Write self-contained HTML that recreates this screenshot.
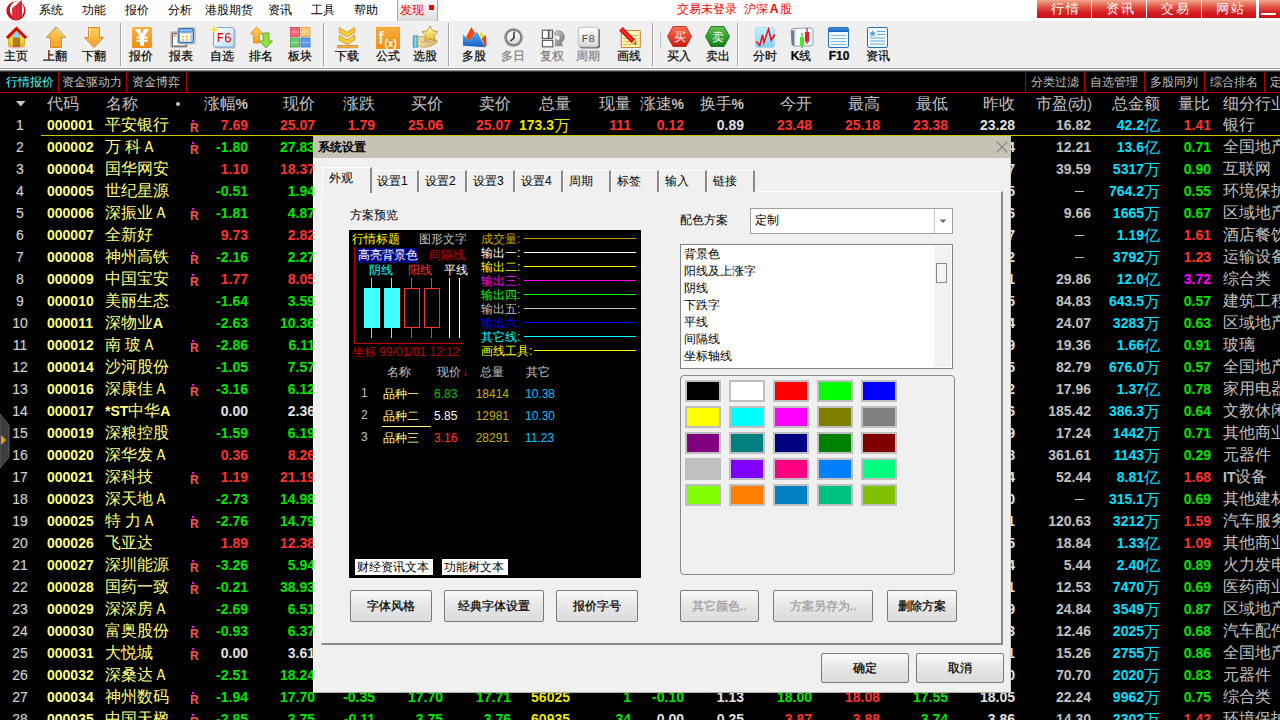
<!DOCTYPE html><html><head><meta charset="utf-8"><style>
html,body{margin:0;padding:0;width:1280px;height:720px;overflow:hidden;background:#000;}
body{position:relative;font-family:"Liberation Sans",sans-serif;}
.a{position:absolute;white-space:nowrap;line-height:1;}
.n{font-family:"Liberation Sans",sans-serif;font-weight:bold;font-size:14px;}
</style></head><body>
<div class="a" style="left:0px;top:0px;width:1280px;height:21px;background:#fff;"></div>
<svg class="a" style="left:0px;top:0px" width="36" height="22" viewBox="0 0 36 22">
<circle cx="16" cy="10.8" r="9.6" fill="#d40a14"/>
<ellipse cx="16.9" cy="9.8" rx="7.1" ry="8.3" fill="#fff"/>
<path d="M12.2 8.2 L21.8 0 L22 13.5 Q22 17 18 19.5 L12.2 19.5Z" fill="#d42030"/>
<path d="M15 6 V19.5 M18 3.5 V19" stroke="#e04050" stroke-width="1.2"/>

</svg>
<div class="a" style="left:39px;top:4px;font-size:12px;color:#000;">系统</div>
<div class="a" style="left:82px;top:4px;font-size:12px;color:#000;">功能</div>
<div class="a" style="left:125px;top:4px;font-size:12px;color:#000;">报价</div>
<div class="a" style="left:168px;top:4px;font-size:12px;color:#000;">分析</div>
<div class="a" style="left:205px;top:4px;font-size:12px;color:#000;">港股期货</div>
<div class="a" style="left:268px;top:4px;font-size:12px;color:#000;">资讯</div>
<div class="a" style="left:311px;top:4px;font-size:12px;color:#000;">工具</div>
<div class="a" style="left:354px;top:4px;font-size:12px;color:#000;">帮助</div>
<div class="a" style="left:397px;top:0px;width:41px;height:21px;background:linear-gradient(#fafafa,#dedede);border-left:1px solid #a8a8a8;border-right:1px solid #a8a8a8;box-sizing:border-box;"></div>
<div class="a" style="left:400px;top:4px;font-size:12px;color:#ff0000;">发现</div>
<div class="a" style="left:429px;top:5px;width:5px;height:5px;background:#ff0000;"></div>
<div class="a" style="left:677px;top:3px;font-size:12px;color:#ff0000;">交易未登录&nbsp;&nbsp;沪深<b style="font-size:12px;margin:0 2px">A</b>股</div>
<div class="a" style="left:1037px;top:0;width:54px;height:18px;background:linear-gradient(#f2a890 0%,#e45a48 35%,#d41c22 70%,#cc1018 100%);color:#fff;font-size:13px;text-align:center;line-height:17px;letter-spacing:2px;padding-left:3px;box-sizing:border-box">行情</div>
<div class="a" style="left:1092px;top:0;width:54px;height:18px;background:linear-gradient(#f2a890 0%,#e45a48 35%,#d41c22 70%,#cc1018 100%);color:#fff;font-size:13px;text-align:center;line-height:17px;letter-spacing:2px;padding-left:3px;box-sizing:border-box">资讯</div>
<div class="a" style="left:1147px;top:0;width:54px;height:18px;background:linear-gradient(#f2a890 0%,#e45a48 35%,#d41c22 70%,#cc1018 100%);color:#fff;font-size:13px;text-align:center;line-height:17px;letter-spacing:2px;padding-left:3px;box-sizing:border-box">交易</div>
<div class="a" style="left:1202px;top:0;width:54px;height:18px;background:linear-gradient(#f2a890 0%,#e45a48 35%,#d41c22 70%,#cc1018 100%);color:#fff;font-size:13px;text-align:center;line-height:17px;letter-spacing:2px;padding-left:3px;box-sizing:border-box">网站</div>
<div class="a" style="left:1259px;top:0;width:21px;height:18px;background:linear-gradient(#f2a890 0%,#e45a48 35%,#d41c22 70%,#cc1018 100%);"></div>
<div class="a" style="left:1261px;top:13px;width:15px;height:2px;background:#fff;"></div>
<div class="a" style="left:0px;top:21px;width:1280px;height:47px;background:#efefef;"></div>
<div class="a" style="left:0px;top:68px;width:1280px;height:1px;background:#a0a0a0;"></div>
<div class="a" style="left:0px;top:69px;width:1280px;height:1px;background:#ffffff;"></div>
<div class="a" style="left:0px;top:70px;width:1280px;height:1px;background:#909090;"></div>
<div class="a" style="left:0px;top:71px;width:1280px;height:1px;background:#383838;"></div>
<div class="a" style="left:-9.5px;top:50px;width:50px;text-align:center;font-size:12px;color:#000;-webkit-text-stroke:0.2px #000">主页</div>
<div class="a" style="left:30px;top:50px;width:50px;text-align:center;font-size:12px;color:#000;-webkit-text-stroke:0.2px #000">上翻</div>
<div class="a" style="left:69px;top:50px;width:50px;text-align:center;font-size:12px;color:#000;-webkit-text-stroke:0.2px #000">下翻</div>
<div class="a" style="left:116px;top:50px;width:50px;text-align:center;font-size:12px;color:#000;-webkit-text-stroke:0.2px #000">报价</div>
<div class="a" style="left:156px;top:50px;width:50px;text-align:center;font-size:12px;color:#000;-webkit-text-stroke:0.2px #000">报表</div>
<div class="a" style="left:197px;top:50px;width:50px;text-align:center;font-size:12px;color:#000;-webkit-text-stroke:0.2px #000">自选</div>
<div class="a" style="left:236px;top:50px;width:50px;text-align:center;font-size:12px;color:#000;-webkit-text-stroke:0.2px #000">排名</div>
<div class="a" style="left:275px;top:50px;width:50px;text-align:center;font-size:12px;color:#000;-webkit-text-stroke:0.2px #000">板块</div>
<div class="a" style="left:321.5px;top:50px;width:50px;text-align:center;font-size:12px;color:#000;-webkit-text-stroke:0.2px #000">下载</div>
<div class="a" style="left:362.5px;top:50px;width:50px;text-align:center;font-size:12px;color:#000;-webkit-text-stroke:0.2px #000">公式</div>
<div class="a" style="left:400px;top:50px;width:50px;text-align:center;font-size:12px;color:#000;-webkit-text-stroke:0.2px #000">选股</div>
<div class="a" style="left:449px;top:50px;width:50px;text-align:center;font-size:12px;color:#000;-webkit-text-stroke:0.2px #000">多股</div>
<div class="a" style="left:487.5px;top:50px;width:50px;text-align:center;font-size:12px;color:#808080;-webkit-text-stroke:0.2px #808080">多日</div>
<div class="a" style="left:527px;top:50px;width:50px;text-align:center;font-size:12px;color:#808080;-webkit-text-stroke:0.2px #808080">复权</div>
<div class="a" style="left:563px;top:50px;width:50px;text-align:center;font-size:12px;color:#808080;-webkit-text-stroke:0.2px #808080">周期</div>
<div class="a" style="left:604px;top:50px;width:50px;text-align:center;font-size:12px;color:#000;-webkit-text-stroke:0.2px #000">画线</div>
<div class="a" style="left:654px;top:50px;width:50px;text-align:center;font-size:12px;color:#000;-webkit-text-stroke:0.2px #000">买入</div>
<div class="a" style="left:693px;top:50px;width:50px;text-align:center;font-size:12px;color:#000;-webkit-text-stroke:0.2px #000">卖出</div>
<div class="a" style="left:740px;top:50px;width:50px;text-align:center;font-size:12px;color:#000;-webkit-text-stroke:0.2px #000">分时</div>
<div class="a" style="left:776px;top:50px;width:50px;text-align:center;font-size:12px;color:#000;-webkit-text-stroke:0.2px #000"><b>K</b>线</div>
<div class="a" style="left:814px;top:50px;width:50px;text-align:center;font-size:12px;color:#000;-webkit-text-stroke:0.2px #000"><b>F10</b></div>
<div class="a" style="left:852.5px;top:50px;width:50px;text-align:center;font-size:12px;color:#000;-webkit-text-stroke:0.2px #000">资讯</div>
<div class="a" style="left:120px;top:23px;width:1px;height:43px;background:#a8a8a8;"></div>
<div class="a" style="left:121px;top:23px;width:1px;height:43px;background:#fff;"></div>
<div class="a" style="left:323px;top:23px;width:1px;height:43px;background:#a8a8a8;"></div>
<div class="a" style="left:324px;top:23px;width:1px;height:43px;background:#fff;"></div>
<div class="a" style="left:448px;top:23px;width:1px;height:43px;background:#a8a8a8;"></div>
<div class="a" style="left:449px;top:23px;width:1px;height:43px;background:#fff;"></div>
<div class="a" style="left:652px;top:23px;width:1px;height:43px;background:#a8a8a8;"></div>
<div class="a" style="left:653px;top:23px;width:1px;height:43px;background:#fff;"></div>
<div class="a" style="left:737px;top:23px;width:1px;height:43px;background:#a8a8a8;"></div>
<div class="a" style="left:738px;top:23px;width:1px;height:43px;background:#fff;"></div>
<div class="a" style="left:660px;top:33px;width:1px;height:14px;background:#c0c0c0;"></div>
<svg width="0" height="0" style="position:absolute"><defs>
<linearGradient id="gOr" x1="0" y1="0" x2="0" y2="1"><stop offset="0" stop-color="#ffd060"/><stop offset="1" stop-color="#f5a020"/></linearGradient>
<linearGradient id="gOr2" x1="0" y1="0" x2="0" y2="1"><stop offset="0" stop-color="#fbb040"/><stop offset="1" stop-color="#f08c10"/></linearGradient>
<linearGradient id="gYel" x1="0" y1="0" x2="0" y2="1"><stop offset="0" stop-color="#fff080"/><stop offset="1" stop-color="#e8c020"/></linearGradient>
<linearGradient id="gRedH" x1="0" y1="0" x2="0" y2="1"><stop offset="0" stop-color="#ff7050"/><stop offset="1" stop-color="#d01810"/></linearGradient>
<linearGradient id="gGrnH" x1="0" y1="0" x2="0" y2="1"><stop offset="0" stop-color="#60c050"/><stop offset="1" stop-color="#108018"/></linearGradient>
<linearGradient id="gLB" x1="0" y1="0" x2="0" y2="1"><stop offset="0" stop-color="#c8f0ff"/><stop offset="1" stop-color="#80d0f8"/></linearGradient>
<linearGradient id="gF6" x1="0" y1="0" x2="1" y2="1"><stop offset="0" stop-color="#ffffff"/><stop offset="1" stop-color="#c0e0f8"/></linearGradient>
<linearGradient id="gGry" x1="0" y1="0" x2="0" y2="1"><stop offset="0" stop-color="#ffffff"/><stop offset="1" stop-color="#d8d8d8"/></linearGradient>
<linearGradient id="gMt" x1="0" y1="0" x2="0" y2="1"><stop offset="0" stop-color="#50b0ff"/><stop offset="1" stop-color="#1860c0"/></linearGradient>
<linearGradient id="gStar" x1="0" y1="0" x2="0" y2="1"><stop offset="0" stop-color="#fff8c0"/><stop offset="1" stop-color="#e8c020"/></linearGradient>
<linearGradient id="gHand" x1="0" y1="0" x2="1" y2="0"><stop offset="0" stop-color="#f0e0a0"/><stop offset="1" stop-color="#d8b070"/></linearGradient>
<linearGradient id="gCuff" x1="0" y1="0" x2="1" y2="0"><stop offset="0" stop-color="#30a8c8"/><stop offset=".5" stop-color="#80e0f8"/><stop offset="1" stop-color="#30a0c0"/></linearGradient>
<linearGradient id="gArr" x1="0" y1="0" x2="1" y2="1"><stop offset="0" stop-color="#d0d0d0"/><stop offset="1" stop-color="#707070"/></linearGradient>
<linearGradient id="gBlue" x1="0" y1="0" x2="0" y2="1"><stop offset="0" stop-color="#4090e0"/><stop offset="1" stop-color="#1060c0"/></linearGradient>
</defs></svg>
<svg class="a" style="left:5px;top:26px" width="24" height="23" viewBox="0 0 24 23"><ellipse cx="11.5" cy="20.8" rx="8.5" ry="1.6" fill="#e8b8b8"/>
<path d="M3.5 9.5 L11.5 3 L19.5 9.5 V20 H3.5Z" fill="url(#gYel)" stroke="#d0a818" stroke-width=".8"/>
<path d="M2 12 L11.5 2.5 L21 12" stroke="#e00000" stroke-width="3" fill="none" stroke-linejoin="miter"/>
<rect x="9" y="7" width="5" height="4.2" fill="#a8dcff" stroke="#5090d0" stroke-width=".7"/>
<rect x="8.5" y="12.5" width="6" height="8" fill="#b08020" stroke="#7a5808" stroke-width=".6"/></svg>
<svg class="a" style="left:45px;top:26px" width="22" height="23" viewBox="0 0 22 23"><path d="M11 1 L20.5 11.5 H16.5 V21.5 H5.5 V11.5 H1.5Z" fill="url(#gOr)" stroke="#d08a30" stroke-width="1"/><path d="M11 2.5 L19 11" stroke="#fff" stroke-width="1" opacity=".8"/></svg>
<svg class="a" style="left:83px;top:26px" width="22" height="23" viewBox="0 0 22 23"><path d="M5.5 1.5 H16.5 V11.5 H20.5 L11 21.5 L1.5 11.5 H5.5Z" fill="url(#gOr)" stroke="#d08a30" stroke-width="1"/><path d="M6.5 2.5 V11" stroke="#fff" stroke-width="1" opacity=".8"/></svg>
<svg class="a" style="left:132px;top:27px" width="20" height="21" viewBox="0 0 20 21"><rect x="0" y="0" width="20" height="21" rx="1.5" fill="url(#gOr2)"/><path d="M3 2 H8 L10 7 L12 2 H17 L12.5 9.5 H15.5 V11.5 H12 V12.8 H15.5 V14.8 H12 V19 H8 V14.8 H4.5 V12.8 H8 V11.5 H4.5 V9.5 H7.5Z" fill="#fff"/></svg>
<svg class="a" style="left:170px;top:27px" width="26" height="22" viewBox="0 0 26 22"><rect x="0" y="4" width="18" height="17" rx="2" fill="#cdc7ba"/>
<rect x="2.4" y="6.4" width="13.4" height="12.8" fill="#fff" stroke="#6a6a6a" stroke-width="1.3"/>
<rect x="3" y="7" width="12.2" height="3" fill="#e4e4e4"/>
<circle cx="4.6" cy="8.5" r=".8" fill="#e06050"/><circle cx="6.7" cy="8.5" r=".8" fill="#f0b030"/><circle cx="8.8" cy="8.5" r=".8" fill="#70b040"/>
<rect x="7" y="0" width="19" height="17.5" rx="2" fill="#cdc7ba"/>
<rect x="8.9" y="1.8" width="14.4" height="13.6" rx="1.3" fill="#fff" stroke="#2a70d0" stroke-width="1.5"/>
<rect x="9.6" y="2.5" width="13" height="3.4" fill="#5aa0f0"/>
<path d="M10 3.3 H22" stroke="#b8dcff" stroke-width=".7"/>
<rect x="9.6" y="5.9" width="13" height="1.2" fill="#f0e2c8"/>
<circle cx="13" cy="9.8" r="1.1" fill="#f8c000"/><circle cx="17" cy="9.8" r="1.1" fill="#f8c000"/>
<circle cx="13" cy="12.9" r="1.1" fill="#f8c000"/><circle cx="17" cy="12.9" r="1.1" fill="#f8c000"/>
<rect x="20.3" y="7.1" width="2" height="7.6" fill="#a0ccf4"/></svg>
<svg class="a" style="left:211px;top:26px" width="25" height="23" viewBox="0 0 25 23"><rect x="3.5" y="2.5" width="21" height="20" rx="2" fill="#b8b8b8"/><rect x="2.5" y="1.5" width="20.5" height="19.5" rx="2" fill="url(#gF6)" stroke="#7aa8d8" stroke-width="1"/>
<path d="M7.3 16 V7.6 H12.3 M7.3 11.6 H11.6" stroke="#f00000" stroke-width="1.05" fill="none"/><path d="M19.4 8.4 Q18.6 7.4 16.8 7.5 Q14.6 7.8 14.6 11.5 V13.2 Q14.7 15.9 16.9 15.9 Q19.3 15.9 19.4 13.4 Q19.4 10.9 16.9 10.9 Q15 10.9 14.6 12.6" stroke="#f00000" stroke-width="1.05" fill="none"/>
<path d="M0 1 H6 V6 H0Z" fill="#fff8a0" opacity=".9"/><path d="M3 0 V7 M0 3.5 H6" stroke="#f0d020" stroke-width="1"/></svg>
<svg class="a" style="left:250px;top:26px" width="24" height="23" viewBox="0 0 24 23"><path d="M6.5 1 L13 8 H9.5 V17 H3.5 V8 H0.5Z" fill="url(#gOr)" stroke="#e08a10" stroke-width=".8"/>
<path d="M13 7 H19 V15 H22.5 L16 22 L9.5 15 H13Z" fill="#90e040" stroke="#50a020" stroke-width=".8"/></svg>
<svg class="a" style="left:290px;top:27px" width="21" height="21" viewBox="0 0 21 21"><rect x=".5" y=".5" width="9" height="9" fill="#f06878" stroke="#d04050" stroke-width=".8"/>
<rect x="11" y=".5" width="9" height="9" fill="#fcc870" stroke="#e0a040" stroke-width=".8"/>
<rect x=".5" y="11" width="9" height="9" fill="#70cc70" stroke="#40a040" stroke-width=".8"/>
<rect x="11" y="11" width="9" height="9" fill="#5c9cf0" stroke="#3070d0" stroke-width=".8"/>
<path d="M1 5 H9 M11.5 5 H19.5 M1 15.5 H9 M11.5 15.5 H19.5" stroke="#fff" stroke-width=".6" opacity=".6"/></svg>
<svg class="a" style="left:337px;top:27px" width="22" height="22" viewBox="0 0 22 22"><path d="M2.2 0.5 L10 5.3 L17.7 0.5 L17.7 5.6 L10 9.9 L2.2 5.6Z" fill="#ffcc30" stroke="#c89038" stroke-width=".8" stroke-linejoin="round"/>
<path d="M2.2 8 L10 12.9 L17.7 8 L17.7 13.1 L10 17.4 L2.2 13.1Z" fill="#ffcc30" stroke="#c89038" stroke-width=".8" stroke-linejoin="round"/>
<rect x="0.6" y="18.4" width="20" height="2.4" fill="#ffb830" stroke="#c88838" stroke-width=".8"/></svg>
<svg class="a" style="left:376px;top:27px" width="24" height="22" viewBox="0 0 24 22"><rect x="0" y="0" width="24" height="22" fill="url(#gOr2)" stroke="#f0a000" stroke-width="1"/>
<text x="2.5" y="17" font-family="Liberation Sans" font-size="18" fill="#fff">f</text>
<text x="8.5" y="19.5" font-family="Liberation Sans" font-size="10" font-weight="bold" fill="#fff">(x)</text></svg>
<svg class="a" style="left:412px;top:26px" width="27" height="22" viewBox="0 0 27 22"><rect x="1.2" y="9.5" width="4.6" height="12.2" rx="1" fill="url(#gCuff)" stroke="#3090a8" stroke-width=".6"/>
<path d="M5.8 10.8 Q12 9.5 16 12 L23 13.5 Q26.5 14.5 24.5 17 Q20 19.5 16 21 Q10 22 5.8 20Z" fill="url(#gHand)" stroke="#b89048" stroke-width=".7"/>
<path d="M9 15.5 Q14 16.5 19 15.8" stroke="#c8a060" stroke-width=".8" fill="none"/>
<path d="M18.0 0.0 L20.6 4.6 L25.8 5.7 L22.2 9.6 L22.8 14.8 L18.0 12.6 L13.2 14.8 L13.8 9.6 L10.2 5.7 L15.4 4.6Z" fill="url(#gStar)" stroke="#b09020" stroke-width=".8" stroke-linejoin="round"/></svg>
<svg class="a" style="left:458px;top:24px" width="34" height="26" viewBox="0 0 34 26"><path d="M21.3 10.5 L23.5 7.8 L26.5 12 L24 15Z" fill="#f8e020"/>
<path d="M23.8 14.5 L27.8 11 L28.6 21.5 L27 23Z" fill="#e84010"/>
<path d="M8 13.5 L13.3 3 L17.2 9.5 L11.3 17.2Z" fill="#f04a10"/>
<path d="M5 10.5 L11.3 17 L19 7.5 L27.3 23.2 L5 21.8Z" fill="url(#gMt)"/></svg>
<svg class="a" style="left:503px;top:27px" width="21" height="21" viewBox="0 0 21 21"><circle cx="10.5" cy="10.5" r="9.5" fill="#a0a0a0"/><circle cx="10.5" cy="10.5" r="8" fill="#707070"/>
<circle cx="10.5" cy="10.5" r="6.8" fill="url(#gGry)"/>
<path d="M11 4.5 V11 L7.5 14" stroke="#202020" stroke-width="1.4" fill="none"/></svg>
<svg class="a" style="left:541px;top:29px" width="25" height="19" viewBox="0 0 25 19"><rect x="1.4" y="1.2" width="6" height="8.2" fill="#fff" stroke="#606060" stroke-width="1.2"/>
<rect x="7.9" y="1.2" width="3.6" height="8.2" fill="#e4e4e4" stroke="#606060" stroke-width="1.2"/>
<rect x="1.4" y="11.4" width="10.4" height="6.4" fill="#fafafa" stroke="#606060" stroke-width="1.2"/>
<path d="M13.5 3.2 Q19.5 -0.5 22.5 4.5 Q25 10 20 14 L21.5 16.8 L14.3 16.8 L14.8 9.8 L17.2 12.2 Q20 9.5 18.8 6.5 Q17 4.5 14 6.5Z" fill="url(#gArr)" stroke="#707070" stroke-width=".6"/></svg>
<svg class="a" style="left:577px;top:26px" width="24" height="23" viewBox="0 0 24 23"><rect x="2.5" y="2.5" width="20.5" height="20" rx="2.5" fill="#707070"/>
<rect x="1.3" y="1.3" width="20" height="19.6" rx="2.5" fill="url(#gGry)" stroke="#b0b0b0" stroke-width=".8"/>
<text x="11.3" y="15.5" font-family="Liberation Mono" font-size="11.5" fill="#505050" text-anchor="middle">F8</text></svg>
<svg class="a" style="left:618px;top:26px" width="24" height="23" viewBox="0 0 24 23"><rect x="3.3" y="4.5" width="19" height="17" rx="1" fill="#fff6b8" stroke="#c88838" stroke-width="1.1"/>
<path d="M7 9.5 H20 M5 12.5 H20 M5 15.5 H20 M5 18.5 H20" stroke="#f8b848" stroke-width="1"/>
<path d="M4.8 1.4 L1.6 4.6 L13.4 16.6 L16.6 13.4Z" fill="#ee1010" stroke="#901010" stroke-width=".8"/>
<path d="M13.4 16.6 L18.2 18.2 L16.6 13.4Z" fill="#f8e060" stroke="#901010" stroke-width=".6"/>
<path d="M16.4 17.6 L18.2 18.2 L17.6 16.4Z" fill="#901010"/>
<path d="M3.5 3.2 L14.5 14.2" stroke="#ff7070" stroke-width=".7"/></svg>
<svg class="a" style="left:667px;top:26px" width="25" height="21" viewBox="0 0 25 21"><path d="M6 .5 H19 L24.5 10.5 L19 20.5 H6 L.5 10.5Z" fill="url(#gRedH)" stroke="#b02010" stroke-width=".8"/>
<text x="12.5" y="15" font-size="12" fill="#fff" text-anchor="middle">买</text></svg>
<svg class="a" style="left:705px;top:26px" width="25" height="21" viewBox="0 0 25 21"><path d="M6 .5 H19 L24.5 10.5 L19 20.5 H6 L.5 10.5Z" fill="url(#gGrnH)" stroke="#106010" stroke-width=".8"/>
<text x="12.5" y="15" font-size="12" fill="#fff" text-anchor="middle">卖</text></svg>
<svg class="a" style="left:755px;top:27px" width="21" height="21" viewBox="0 0 21 21"><rect x=".5" y=".5" width="19" height="20" rx="2" fill="url(#gLB)" stroke="#a0d8f0" stroke-width=".8"/>
<path d="M1 14.5 L4.75 18.5 L7.5 8 L9 15.5 L13.5 2 L16.25 13.25 L19.75 7.5" stroke="#f01010" stroke-width="1.5" fill="none" stroke-linejoin="miter"/></svg>
<svg class="a" style="left:790px;top:27px" width="24" height="21" viewBox="0 0 24 21"><path d="M1 4 Q1 1.5 4 1.5 L20 0.8 Q23 0.8 23 3.5 V16 Q23 19 20 19 H6 Q3 19 2.5 17Z" fill="#fbfcff" stroke="#8aa0c0" stroke-width="1"/>
<path d="M1.2 4 L4 3 L4 19.5 L1.5 17.5Z" fill="#6878a0"/>
<rect x="4" y="3" width="1.5" height="17" fill="#c0c8d8"/>
<path d="M17 1 V17" stroke="#e01818" stroke-width="1.2"/><rect x="15" y="5" width="4" height="9.8" fill="#f02020"/>
<path d="M12 6 V21" stroke="#20d010" stroke-width="1.2"/><rect x="10" y="10" width="4" height="9" fill="#40f020"/></svg>
<svg class="a" style="left:828px;top:27px" width="21" height="21" viewBox="0 0 21 21"><rect x=".5" y=".5" width="20" height="20" rx="1.5" fill="#f0f8ff" stroke="#2070c0" stroke-width="1"/>
<rect x="1" y="1" width="19" height="4" fill="url(#gBlue)"/>
<path d="M3 8.5 H18 M3 11.5 H18 M3 14.5 H18 M3 17.5 H18" stroke="#80b8e8" stroke-width="1"/></svg>
<svg class="a" style="left:867px;top:27px" width="21" height="21" viewBox="0 0 21 21"><rect x=".5" y=".5" width="20" height="20" rx="1.5" fill="#f8fcff" stroke="#2070c0" stroke-width="1"/>
<path d="M5.5 3 L6.5 5.5 L9 5.6 L7 7.2 L7.7 9.7 L5.5 8.3 L3.3 9.7 L4 7.2 L2 5.6 L4.5 5.5Z" fill="#40a0e0"/>
<path d="M10 4.5 H18 M10 7.5 H18 M3 11 H18 M3 14 H18 M3 17 H18" stroke="#60a8e0" stroke-width="1"/></svg>
<div class="a" style="left:0px;top:72px;width:1280px;height:20px;background:#000;"></div>
<div class="a" style="left:0px;top:92px;width:1280px;height:1px;background:#b80000;"></div>
<div class="a" style="left:6px;top:76px;font-size:12px;color:#50ffff;">行情报价</div>
<div class="a" style="left:62px;top:76px;font-size:12px;color:#c0c0c0;">资金驱动力</div>
<div class="a" style="left:132px;top:76px;font-size:12px;color:#c0c0c0;">资金博弈</div>
<div class="a" style="left:58px;top:72px;width:1px;height:20px;background:#b80000;"></div>
<div class="a" style="left:126px;top:72px;width:1px;height:20px;background:#b80000;"></div>
<div class="a" style="left:186px;top:72px;width:1px;height:20px;background:#b80000;"></div>
<div class="a" style="left:1025px;top:72px;width:1px;height:20px;background:#b80000;"></div>
<div class="a" style="left:1084px;top:72px;width:1px;height:20px;background:#b80000;"></div>
<div class="a" style="left:1144px;top:72px;width:1px;height:20px;background:#b80000;"></div>
<div class="a" style="left:1204px;top:72px;width:1px;height:20px;background:#b80000;"></div>
<div class="a" style="left:1264px;top:72px;width:1px;height:20px;background:#b80000;"></div>
<div class="a" style="left:1031px;top:76px;font-size:12px;color:#c0c0c0;">分类过滤</div>
<div class="a" style="left:1090px;top:76px;font-size:12px;color:#c0c0c0;">自选管理</div>
<div class="a" style="left:1150px;top:76px;font-size:12px;color:#c0c0c0;">多股同列</div>
<div class="a" style="left:1210px;top:76px;font-size:12px;color:#c0c0c0;">综合排名</div>
<div class="a" style="left:1270px;top:76px;font-size:12px;color:#c0c0c0;">定制</div>
<div class="a" style="left:47px;top:96px;font-size:16px;color:#c0c0c0">代码</div>
<div class="a" style="left:106px;top:96px;font-size:16px;color:#c0c0c0">名称</div>
<div class="a" style="left:148px;top:96px;width:100px;text-align:right;font-size:16px;color:#c0c0c0">涨幅<span style="font-weight:bold;font-size:14px">%</span></div>
<div class="a" style="left:215px;top:96px;width:100px;text-align:right;font-size:16px;color:#c0c0c0">现价</div>
<div class="a" style="left:275px;top:96px;width:100px;text-align:right;font-size:16px;color:#c0c0c0">涨跌</div>
<div class="a" style="left:343px;top:96px;width:100px;text-align:right;font-size:16px;color:#c0c0c0">买价</div>
<div class="a" style="left:411px;top:96px;width:100px;text-align:right;font-size:16px;color:#c0c0c0">卖价</div>
<div class="a" style="left:471px;top:96px;width:100px;text-align:right;font-size:16px;color:#c0c0c0">总量</div>
<div class="a" style="left:531px;top:96px;width:100px;text-align:right;font-size:16px;color:#c0c0c0">现量</div>
<div class="a" style="left:584px;top:96px;width:100px;text-align:right;font-size:16px;color:#c0c0c0">涨速<span style="font-weight:bold;font-size:14px">%</span></div>
<div class="a" style="left:644px;top:96px;width:100px;text-align:right;font-size:16px;color:#c0c0c0">换手<span style="font-weight:bold;font-size:14px">%</span></div>
<div class="a" style="left:712px;top:96px;width:100px;text-align:right;font-size:16px;color:#c0c0c0">今开</div>
<div class="a" style="left:780px;top:96px;width:100px;text-align:right;font-size:16px;color:#c0c0c0">最高</div>
<div class="a" style="left:848px;top:96px;width:100px;text-align:right;font-size:16px;color:#c0c0c0">最低</div>
<div class="a" style="left:915px;top:96px;width:100px;text-align:right;font-size:16px;color:#c0c0c0">昨收</div>
<div class="a" style="left:992px;top:96px;width:100px;text-align:right;font-size:16px;color:#c0c0c0">市盈<span style="font-size:14px;letter-spacing:-1px">(</span>动<span style="font-size:14px">)</span></div>
<div class="a" style="left:1060px;top:96px;width:100px;text-align:right;font-size:16px;color:#c0c0c0">总金额</div>
<div class="a" style="left:1110px;top:96px;width:100px;text-align:right;font-size:16px;color:#c0c0c0">量比</div>
<div class="a" style="left:1223px;top:96px;font-size:16px;color:#c0c0c0">细分行业</div>
<svg class="a" style="left:16px;top:101px" width="10" height="6"><path d="M0 0H9.5L4.75 5.5Z" fill="#c8c8c8"/></svg>
<div class="a" style="left:176px;top:102px;width:4px;height:4px;background:#c0c0c0;border-radius:2px"></div>
<div class="a" style="left:0;top:114px;width:40px;text-align:center;font-size:14px;color:#d0d0d0;line-height:22px;-webkit-text-stroke:0.15px #d0d0d0">1</div>
<div class="a n" style="left:47px;top:114px;color:#ffff80;line-height:22px">000001</div>
<div class="a" style="left:105px;top:114px;color:#ffff80;font-size:16px;line-height:22px">平安银行</div>
<div class="a n" style="left:190px;top:122px;color:#ff5050;font-size:12px;line-height:1">R</div>
<div class="a" style="left:192px;top:120px;width:2px;height:2px;background:#ff00ff;"></div>
<div class="a n" style="left:128px;top:114px;width:120px;text-align:right;color:#ff3232;line-height:22px">7.69</div>
<div class="a n" style="left:195px;top:114px;width:120px;text-align:right;color:#ff3232;line-height:22px">25.07</div>
<div class="a n" style="left:895px;top:114px;width:120px;text-align:right;color:#e0e0e0;line-height:22px">23.28</div>
<div class="a n" style="left:971px;top:114px;width:120px;text-align:right;color:#c0c0c0;line-height:22px">16.82</div>
<div class="a n" style="left:1040px;top:114px;width:120px;text-align:right;color:#00e0ff;line-height:22px">42.2<span style="font-weight:normal;font-size:16px;position:relative;top:1px">亿</span></div>
<div class="a n" style="left:1091px;top:114px;width:120px;text-align:right;color:#ff3232;line-height:22px">1.41</div>
<div class="a" style="left:1223px;top:114px;color:#c0c0c0;font-size:16px;line-height:22px">银行</div>
<div class="a" style="left:0;top:136px;width:40px;text-align:center;font-size:14px;color:#d0d0d0;line-height:22px;-webkit-text-stroke:0.15px #d0d0d0">2</div>
<div class="a n" style="left:47px;top:136px;color:#ffff80;line-height:22px">000002</div>
<div class="a" style="left:105px;top:136px;color:#ffff80;font-size:16px;line-height:22px">万 科Ａ</div>
<div class="a n" style="left:190px;top:144px;color:#ff5050;font-size:12px;line-height:1">R</div>
<div class="a" style="left:192px;top:142px;width:2px;height:2px;background:#ff00ff;"></div>
<div class="a n" style="left:128px;top:136px;width:120px;text-align:right;color:#00e600;line-height:22px">-1.80</div>
<div class="a n" style="left:195px;top:136px;width:120px;text-align:right;color:#00e600;line-height:22px">27.83</div>
<div class="a n" style="left:895px;top:136px;width:120px;text-align:right;color:#e0e0e0;line-height:22px">27.84</div>
<div class="a n" style="left:971px;top:136px;width:120px;text-align:right;color:#c0c0c0;line-height:22px">12.21</div>
<div class="a n" style="left:1040px;top:136px;width:120px;text-align:right;color:#00e0ff;line-height:22px">13.6<span style="font-weight:normal;font-size:16px;position:relative;top:1px">亿</span></div>
<div class="a n" style="left:1091px;top:136px;width:120px;text-align:right;color:#00e600;line-height:22px">0.71</div>
<div class="a" style="left:1223px;top:136px;color:#c0c0c0;font-size:16px;line-height:22px">全国地产</div>
<div class="a" style="left:0;top:158px;width:40px;text-align:center;font-size:14px;color:#d0d0d0;line-height:22px;-webkit-text-stroke:0.15px #d0d0d0">3</div>
<div class="a n" style="left:47px;top:158px;color:#ffff80;line-height:22px">000004</div>
<div class="a" style="left:105px;top:158px;color:#ffff80;font-size:16px;line-height:22px">国华网安</div>
<div class="a n" style="left:128px;top:158px;width:120px;text-align:right;color:#ff3232;line-height:22px">1.10</div>
<div class="a n" style="left:195px;top:158px;width:120px;text-align:right;color:#ff3232;line-height:22px">18.37</div>
<div class="a n" style="left:895px;top:158px;width:120px;text-align:right;color:#e0e0e0;line-height:22px">18.37</div>
<div class="a n" style="left:971px;top:158px;width:120px;text-align:right;color:#c0c0c0;line-height:22px">39.59</div>
<div class="a n" style="left:1040px;top:158px;width:120px;text-align:right;color:#00e0ff;line-height:22px">5317<span style="font-weight:normal;font-size:16px;position:relative;top:1px">万</span></div>
<div class="a n" style="left:1091px;top:158px;width:120px;text-align:right;color:#00e600;line-height:22px">0.90</div>
<div class="a" style="left:1223px;top:158px;color:#c0c0c0;font-size:16px;line-height:22px">互联网</div>
<div class="a" style="left:0;top:180px;width:40px;text-align:center;font-size:14px;color:#d0d0d0;line-height:22px;-webkit-text-stroke:0.15px #d0d0d0">4</div>
<div class="a n" style="left:47px;top:180px;color:#ffff80;line-height:22px">000005</div>
<div class="a" style="left:105px;top:180px;color:#ffff80;font-size:16px;line-height:22px">世纪星源</div>
<div class="a n" style="left:128px;top:180px;width:120px;text-align:right;color:#00e600;line-height:22px">-0.51</div>
<div class="a n" style="left:195px;top:180px;width:120px;text-align:right;color:#00e600;line-height:22px">1.94</div>
<div class="a n" style="left:895px;top:180px;width:120px;text-align:right;color:#e0e0e0;line-height:22px">1.95</div>
<div class="a" style="left:1075px;top:191px;width:9px;height:1px;background:#c0c0c0"></div>
<div class="a n" style="left:1040px;top:180px;width:120px;text-align:right;color:#00e0ff;line-height:22px">764.2<span style="font-weight:normal;font-size:16px;position:relative;top:1px">万</span></div>
<div class="a n" style="left:1091px;top:180px;width:120px;text-align:right;color:#00e600;line-height:22px">0.55</div>
<div class="a" style="left:1223px;top:180px;color:#c0c0c0;font-size:16px;line-height:22px">环境保护</div>
<div class="a" style="left:0;top:202px;width:40px;text-align:center;font-size:14px;color:#d0d0d0;line-height:22px;-webkit-text-stroke:0.15px #d0d0d0">5</div>
<div class="a n" style="left:47px;top:202px;color:#ffff80;line-height:22px">000006</div>
<div class="a" style="left:105px;top:202px;color:#ffff80;font-size:16px;line-height:22px">深振业Ａ</div>
<div class="a n" style="left:190px;top:210px;color:#ff5050;font-size:12px;line-height:1">R</div>
<div class="a" style="left:192px;top:208px;width:2px;height:2px;background:#ff00ff;"></div>
<div class="a n" style="left:128px;top:202px;width:120px;text-align:right;color:#00e600;line-height:22px">-1.81</div>
<div class="a n" style="left:195px;top:202px;width:120px;text-align:right;color:#00e600;line-height:22px">4.87</div>
<div class="a n" style="left:895px;top:202px;width:120px;text-align:right;color:#e0e0e0;line-height:22px">4.96</div>
<div class="a n" style="left:971px;top:202px;width:120px;text-align:right;color:#c0c0c0;line-height:22px">9.66</div>
<div class="a n" style="left:1040px;top:202px;width:120px;text-align:right;color:#00e0ff;line-height:22px">1665<span style="font-weight:normal;font-size:16px;position:relative;top:1px">万</span></div>
<div class="a n" style="left:1091px;top:202px;width:120px;text-align:right;color:#00e600;line-height:22px">0.67</div>
<div class="a" style="left:1223px;top:202px;color:#c0c0c0;font-size:16px;line-height:22px">区域地产</div>
<div class="a" style="left:0;top:224px;width:40px;text-align:center;font-size:14px;color:#d0d0d0;line-height:22px;-webkit-text-stroke:0.15px #d0d0d0">6</div>
<div class="a n" style="left:47px;top:224px;color:#ffff80;line-height:22px">000007</div>
<div class="a" style="left:105px;top:224px;color:#ffff80;font-size:16px;line-height:22px">全新好</div>
<div class="a n" style="left:128px;top:224px;width:120px;text-align:right;color:#ff3232;line-height:22px">9.73</div>
<div class="a n" style="left:195px;top:224px;width:120px;text-align:right;color:#ff3232;line-height:22px">2.82</div>
<div class="a n" style="left:895px;top:224px;width:120px;text-align:right;color:#e0e0e0;line-height:22px">2.57</div>
<div class="a" style="left:1075px;top:235px;width:9px;height:1px;background:#c0c0c0"></div>
<div class="a n" style="left:1040px;top:224px;width:120px;text-align:right;color:#00e0ff;line-height:22px">1.19<span style="font-weight:normal;font-size:16px;position:relative;top:1px">亿</span></div>
<div class="a n" style="left:1091px;top:224px;width:120px;text-align:right;color:#ff3232;line-height:22px">1.61</div>
<div class="a" style="left:1223px;top:224px;color:#c0c0c0;font-size:16px;line-height:22px">酒店餐饮</div>
<div class="a" style="left:0;top:246px;width:40px;text-align:center;font-size:14px;color:#d0d0d0;line-height:22px;-webkit-text-stroke:0.15px #d0d0d0">7</div>
<div class="a n" style="left:47px;top:246px;color:#ffff80;line-height:22px">000008</div>
<div class="a" style="left:105px;top:246px;color:#ffff80;font-size:16px;line-height:22px">神州高铁</div>
<div class="a n" style="left:190px;top:254px;color:#ff5050;font-size:12px;line-height:1">R</div>
<div class="a" style="left:192px;top:252px;width:2px;height:2px;background:#ff00ff;"></div>
<div class="a n" style="left:128px;top:246px;width:120px;text-align:right;color:#00e600;line-height:22px">-2.16</div>
<div class="a n" style="left:195px;top:246px;width:120px;text-align:right;color:#00e600;line-height:22px">2.27</div>
<div class="a n" style="left:895px;top:246px;width:120px;text-align:right;color:#e0e0e0;line-height:22px">2.32</div>
<div class="a" style="left:1075px;top:257px;width:9px;height:1px;background:#c0c0c0"></div>
<div class="a n" style="left:1040px;top:246px;width:120px;text-align:right;color:#00e0ff;line-height:22px">3792<span style="font-weight:normal;font-size:16px;position:relative;top:1px">万</span></div>
<div class="a n" style="left:1091px;top:246px;width:120px;text-align:right;color:#ff3232;line-height:22px">1.23</div>
<div class="a" style="left:1223px;top:246px;color:#c0c0c0;font-size:16px;line-height:22px">运输设备</div>
<div class="a" style="left:0;top:268px;width:40px;text-align:center;font-size:14px;color:#d0d0d0;line-height:22px;-webkit-text-stroke:0.15px #d0d0d0">8</div>
<div class="a n" style="left:47px;top:268px;color:#ffff80;line-height:22px">000009</div>
<div class="a" style="left:105px;top:268px;color:#ffff80;font-size:16px;line-height:22px">中国宝安</div>
<div class="a n" style="left:190px;top:276px;color:#ff5050;font-size:12px;line-height:1">R</div>
<div class="a" style="left:192px;top:274px;width:2px;height:2px;background:#ff00ff;"></div>
<div class="a n" style="left:128px;top:268px;width:120px;text-align:right;color:#ff3232;line-height:22px">1.77</div>
<div class="a n" style="left:195px;top:268px;width:120px;text-align:right;color:#ff3232;line-height:22px">8.05</div>
<div class="a n" style="left:895px;top:268px;width:120px;text-align:right;color:#e0e0e0;line-height:22px">7.91</div>
<div class="a n" style="left:971px;top:268px;width:120px;text-align:right;color:#c0c0c0;line-height:22px">29.86</div>
<div class="a n" style="left:1040px;top:268px;width:120px;text-align:right;color:#00e0ff;line-height:22px">12.0<span style="font-weight:normal;font-size:16px;position:relative;top:1px">亿</span></div>
<div class="a n" style="left:1091px;top:268px;width:120px;text-align:right;color:#ff00ff;line-height:22px">3.72</div>
<div class="a" style="left:1223px;top:268px;color:#c0c0c0;font-size:16px;line-height:22px">综合类</div>
<div class="a" style="left:0;top:290px;width:40px;text-align:center;font-size:14px;color:#d0d0d0;line-height:22px;-webkit-text-stroke:0.15px #d0d0d0">9</div>
<div class="a n" style="left:47px;top:290px;color:#ffff80;line-height:22px">000010</div>
<div class="a" style="left:105px;top:290px;color:#ffff80;font-size:16px;line-height:22px">美丽生态</div>
<div class="a n" style="left:128px;top:290px;width:120px;text-align:right;color:#00e600;line-height:22px">-1.64</div>
<div class="a n" style="left:195px;top:290px;width:120px;text-align:right;color:#00e600;line-height:22px">3.59</div>
<div class="a n" style="left:895px;top:290px;width:120px;text-align:right;color:#e0e0e0;line-height:22px">3.65</div>
<div class="a n" style="left:971px;top:290px;width:120px;text-align:right;color:#c0c0c0;line-height:22px">84.83</div>
<div class="a n" style="left:1040px;top:290px;width:120px;text-align:right;color:#00e0ff;line-height:22px">643.5<span style="font-weight:normal;font-size:16px;position:relative;top:1px">万</span></div>
<div class="a n" style="left:1091px;top:290px;width:120px;text-align:right;color:#00e600;line-height:22px">0.57</div>
<div class="a" style="left:1223px;top:290px;color:#c0c0c0;font-size:16px;line-height:22px">建筑工程</div>
<div class="a" style="left:0;top:312px;width:40px;text-align:center;font-size:14px;color:#d0d0d0;line-height:22px;-webkit-text-stroke:0.15px #d0d0d0">10</div>
<div class="a n" style="left:47px;top:312px;color:#ffff80;line-height:22px">000011</div>
<div class="a" style="left:105px;top:312px;color:#ffff80;font-size:16px;line-height:22px">深物业<b style="font-size:14px">A</b></div>
<div class="a n" style="left:128px;top:312px;width:120px;text-align:right;color:#00e600;line-height:22px">-2.63</div>
<div class="a n" style="left:195px;top:312px;width:120px;text-align:right;color:#00e600;line-height:22px">10.36</div>
<div class="a n" style="left:895px;top:312px;width:120px;text-align:right;color:#e0e0e0;line-height:22px">10.64</div>
<div class="a n" style="left:971px;top:312px;width:120px;text-align:right;color:#c0c0c0;line-height:22px">24.07</div>
<div class="a n" style="left:1040px;top:312px;width:120px;text-align:right;color:#00e0ff;line-height:22px">3283<span style="font-weight:normal;font-size:16px;position:relative;top:1px">万</span></div>
<div class="a n" style="left:1091px;top:312px;width:120px;text-align:right;color:#00e600;line-height:22px">0.63</div>
<div class="a" style="left:1223px;top:312px;color:#c0c0c0;font-size:16px;line-height:22px">区域地产</div>
<div class="a" style="left:0;top:334px;width:40px;text-align:center;font-size:14px;color:#d0d0d0;line-height:22px;-webkit-text-stroke:0.15px #d0d0d0">11</div>
<div class="a n" style="left:47px;top:334px;color:#ffff80;line-height:22px">000012</div>
<div class="a" style="left:105px;top:334px;color:#ffff80;font-size:16px;line-height:22px">南 玻Ａ</div>
<div class="a n" style="left:190px;top:342px;color:#ff5050;font-size:12px;line-height:1">R</div>
<div class="a" style="left:192px;top:340px;width:2px;height:2px;background:#ff00ff;"></div>
<div class="a n" style="left:128px;top:334px;width:120px;text-align:right;color:#00e600;line-height:22px">-2.86</div>
<div class="a n" style="left:195px;top:334px;width:120px;text-align:right;color:#00e600;line-height:22px">6.11</div>
<div class="a n" style="left:895px;top:334px;width:120px;text-align:right;color:#e0e0e0;line-height:22px">6.29</div>
<div class="a n" style="left:971px;top:334px;width:120px;text-align:right;color:#c0c0c0;line-height:22px">19.36</div>
<div class="a n" style="left:1040px;top:334px;width:120px;text-align:right;color:#00e0ff;line-height:22px">1.66<span style="font-weight:normal;font-size:16px;position:relative;top:1px">亿</span></div>
<div class="a n" style="left:1091px;top:334px;width:120px;text-align:right;color:#00e600;line-height:22px">0.91</div>
<div class="a" style="left:1223px;top:334px;color:#c0c0c0;font-size:16px;line-height:22px">玻璃</div>
<div class="a" style="left:0;top:356px;width:40px;text-align:center;font-size:14px;color:#d0d0d0;line-height:22px;-webkit-text-stroke:0.15px #d0d0d0">12</div>
<div class="a n" style="left:47px;top:356px;color:#ffff80;line-height:22px">000014</div>
<div class="a" style="left:105px;top:356px;color:#ffff80;font-size:16px;line-height:22px">沙河股份</div>
<div class="a n" style="left:128px;top:356px;width:120px;text-align:right;color:#00e600;line-height:22px">-1.05</div>
<div class="a n" style="left:195px;top:356px;width:120px;text-align:right;color:#00e600;line-height:22px">7.57</div>
<div class="a n" style="left:895px;top:356px;width:120px;text-align:right;color:#e0e0e0;line-height:22px">7.65</div>
<div class="a n" style="left:971px;top:356px;width:120px;text-align:right;color:#c0c0c0;line-height:22px">82.79</div>
<div class="a n" style="left:1040px;top:356px;width:120px;text-align:right;color:#00e0ff;line-height:22px">676.0<span style="font-weight:normal;font-size:16px;position:relative;top:1px">万</span></div>
<div class="a n" style="left:1091px;top:356px;width:120px;text-align:right;color:#00e600;line-height:22px">0.57</div>
<div class="a" style="left:1223px;top:356px;color:#c0c0c0;font-size:16px;line-height:22px">全国地产</div>
<div class="a" style="left:0;top:378px;width:40px;text-align:center;font-size:14px;color:#d0d0d0;line-height:22px;-webkit-text-stroke:0.15px #d0d0d0">13</div>
<div class="a n" style="left:47px;top:378px;color:#ffff80;line-height:22px">000016</div>
<div class="a" style="left:105px;top:378px;color:#ffff80;font-size:16px;line-height:22px">深康佳Ａ</div>
<div class="a n" style="left:190px;top:386px;color:#ff5050;font-size:12px;line-height:1">R</div>
<div class="a" style="left:192px;top:384px;width:2px;height:2px;background:#ff00ff;"></div>
<div class="a n" style="left:128px;top:378px;width:120px;text-align:right;color:#00e600;line-height:22px">-3.16</div>
<div class="a n" style="left:195px;top:378px;width:120px;text-align:right;color:#00e600;line-height:22px">6.12</div>
<div class="a n" style="left:895px;top:378px;width:120px;text-align:right;color:#e0e0e0;line-height:22px">6.32</div>
<div class="a n" style="left:971px;top:378px;width:120px;text-align:right;color:#c0c0c0;line-height:22px">17.96</div>
<div class="a n" style="left:1040px;top:378px;width:120px;text-align:right;color:#00e0ff;line-height:22px">1.37<span style="font-weight:normal;font-size:16px;position:relative;top:1px">亿</span></div>
<div class="a n" style="left:1091px;top:378px;width:120px;text-align:right;color:#00e600;line-height:22px">0.78</div>
<div class="a" style="left:1223px;top:378px;color:#c0c0c0;font-size:16px;line-height:22px">家用电器</div>
<div class="a" style="left:0;top:400px;width:40px;text-align:center;font-size:14px;color:#d0d0d0;line-height:22px;-webkit-text-stroke:0.15px #d0d0d0">14</div>
<div class="a n" style="left:47px;top:400px;color:#ffff80;line-height:22px">000017</div>
<div class="a" style="left:105px;top:400px;color:#ffff80;font-size:16px;line-height:22px"><b style="font-size:14px">*ST</b>中华<b style="font-size:14px">A</b></div>
<div class="a n" style="left:128px;top:400px;width:120px;text-align:right;color:#e0e0e0;line-height:22px">0.00</div>
<div class="a n" style="left:195px;top:400px;width:120px;text-align:right;color:#e0e0e0;line-height:22px">2.36</div>
<div class="a n" style="left:895px;top:400px;width:120px;text-align:right;color:#e0e0e0;line-height:22px">2.36</div>
<div class="a n" style="left:971px;top:400px;width:120px;text-align:right;color:#c0c0c0;line-height:22px">185.42</div>
<div class="a n" style="left:1040px;top:400px;width:120px;text-align:right;color:#00e0ff;line-height:22px">386.3<span style="font-weight:normal;font-size:16px;position:relative;top:1px">万</span></div>
<div class="a n" style="left:1091px;top:400px;width:120px;text-align:right;color:#00e600;line-height:22px">0.64</div>
<div class="a" style="left:1223px;top:400px;color:#c0c0c0;font-size:16px;line-height:22px">文教休闲</div>
<div class="a" style="left:0;top:422px;width:40px;text-align:center;font-size:14px;color:#d0d0d0;line-height:22px;-webkit-text-stroke:0.15px #d0d0d0">15</div>
<div class="a n" style="left:47px;top:422px;color:#ffff80;line-height:22px">000019</div>
<div class="a" style="left:105px;top:422px;color:#ffff80;font-size:16px;line-height:22px">深粮控股</div>
<div class="a n" style="left:128px;top:422px;width:120px;text-align:right;color:#00e600;line-height:22px">-1.59</div>
<div class="a n" style="left:195px;top:422px;width:120px;text-align:right;color:#00e600;line-height:22px">6.19</div>
<div class="a n" style="left:895px;top:422px;width:120px;text-align:right;color:#e0e0e0;line-height:22px">6.29</div>
<div class="a n" style="left:971px;top:422px;width:120px;text-align:right;color:#c0c0c0;line-height:22px">17.24</div>
<div class="a n" style="left:1040px;top:422px;width:120px;text-align:right;color:#00e0ff;line-height:22px">1442<span style="font-weight:normal;font-size:16px;position:relative;top:1px">万</span></div>
<div class="a n" style="left:1091px;top:422px;width:120px;text-align:right;color:#00e600;line-height:22px">0.71</div>
<div class="a" style="left:1223px;top:422px;color:#c0c0c0;font-size:16px;line-height:22px">其他商业</div>
<div class="a" style="left:0;top:444px;width:40px;text-align:center;font-size:14px;color:#d0d0d0;line-height:22px;-webkit-text-stroke:0.15px #d0d0d0">16</div>
<div class="a n" style="left:47px;top:444px;color:#ffff80;line-height:22px">000020</div>
<div class="a" style="left:105px;top:444px;color:#ffff80;font-size:16px;line-height:22px">深华发Ａ</div>
<div class="a n" style="left:128px;top:444px;width:120px;text-align:right;color:#ff3232;line-height:22px">0.36</div>
<div class="a n" style="left:195px;top:444px;width:120px;text-align:right;color:#ff3232;line-height:22px">8.26</div>
<div class="a n" style="left:895px;top:444px;width:120px;text-align:right;color:#e0e0e0;line-height:22px">8.28</div>
<div class="a n" style="left:971px;top:444px;width:120px;text-align:right;color:#c0c0c0;line-height:22px">361.61</div>
<div class="a n" style="left:1040px;top:444px;width:120px;text-align:right;color:#00e0ff;line-height:22px">1143<span style="font-weight:normal;font-size:16px;position:relative;top:1px">万</span></div>
<div class="a n" style="left:1091px;top:444px;width:120px;text-align:right;color:#00e600;line-height:22px">0.29</div>
<div class="a" style="left:1223px;top:444px;color:#c0c0c0;font-size:16px;line-height:22px">元器件</div>
<div class="a" style="left:0;top:466px;width:40px;text-align:center;font-size:14px;color:#d0d0d0;line-height:22px;-webkit-text-stroke:0.15px #d0d0d0">17</div>
<div class="a n" style="left:47px;top:466px;color:#ffff80;line-height:22px">000021</div>
<div class="a" style="left:105px;top:466px;color:#ffff80;font-size:16px;line-height:22px">深科技</div>
<div class="a n" style="left:190px;top:474px;color:#ff5050;font-size:12px;line-height:1">R</div>
<div class="a" style="left:192px;top:472px;width:2px;height:2px;background:#ff00ff;"></div>
<div class="a n" style="left:128px;top:466px;width:120px;text-align:right;color:#ff3232;line-height:22px">1.19</div>
<div class="a n" style="left:195px;top:466px;width:120px;text-align:right;color:#ff3232;line-height:22px">21.19</div>
<div class="a n" style="left:895px;top:466px;width:120px;text-align:right;color:#e0e0e0;line-height:22px">20.94</div>
<div class="a n" style="left:971px;top:466px;width:120px;text-align:right;color:#c0c0c0;line-height:22px">52.44</div>
<div class="a n" style="left:1040px;top:466px;width:120px;text-align:right;color:#00e0ff;line-height:22px">8.81<span style="font-weight:normal;font-size:16px;position:relative;top:1px">亿</span></div>
<div class="a n" style="left:1091px;top:466px;width:120px;text-align:right;color:#ff3232;line-height:22px">1.68</div>
<div class="a" style="left:1223px;top:466px;color:#c0c0c0;font-size:16px;line-height:22px"><b style="font-size:14px">IT</b>设备</div>
<div class="a" style="left:0;top:488px;width:40px;text-align:center;font-size:14px;color:#d0d0d0;line-height:22px;-webkit-text-stroke:0.15px #d0d0d0">18</div>
<div class="a n" style="left:47px;top:488px;color:#ffff80;line-height:22px">000023</div>
<div class="a" style="left:105px;top:488px;color:#ffff80;font-size:16px;line-height:22px">深天地Ａ</div>
<div class="a n" style="left:128px;top:488px;width:120px;text-align:right;color:#00e600;line-height:22px">-2.73</div>
<div class="a n" style="left:195px;top:488px;width:120px;text-align:right;color:#00e600;line-height:22px">14.98</div>
<div class="a n" style="left:895px;top:488px;width:120px;text-align:right;color:#e0e0e0;line-height:22px">15.40</div>
<div class="a" style="left:1075px;top:499px;width:9px;height:1px;background:#c0c0c0"></div>
<div class="a n" style="left:1040px;top:488px;width:120px;text-align:right;color:#00e0ff;line-height:22px">315.1<span style="font-weight:normal;font-size:16px;position:relative;top:1px">万</span></div>
<div class="a n" style="left:1091px;top:488px;width:120px;text-align:right;color:#00e600;line-height:22px">0.69</div>
<div class="a" style="left:1223px;top:488px;color:#c0c0c0;font-size:16px;line-height:22px">其他建材</div>
<div class="a" style="left:0;top:510px;width:40px;text-align:center;font-size:14px;color:#d0d0d0;line-height:22px;-webkit-text-stroke:0.15px #d0d0d0">19</div>
<div class="a n" style="left:47px;top:510px;color:#ffff80;line-height:22px">000025</div>
<div class="a" style="left:105px;top:510px;color:#ffff80;font-size:16px;line-height:22px">特 力Ａ</div>
<div class="a n" style="left:190px;top:518px;color:#ff5050;font-size:12px;line-height:1">R</div>
<div class="a" style="left:192px;top:516px;width:2px;height:2px;background:#ff00ff;"></div>
<div class="a n" style="left:128px;top:510px;width:120px;text-align:right;color:#00e600;line-height:22px">-2.76</div>
<div class="a n" style="left:195px;top:510px;width:120px;text-align:right;color:#00e600;line-height:22px">14.79</div>
<div class="a n" style="left:895px;top:510px;width:120px;text-align:right;color:#e0e0e0;line-height:22px">15.21</div>
<div class="a n" style="left:971px;top:510px;width:120px;text-align:right;color:#c0c0c0;line-height:22px">120.63</div>
<div class="a n" style="left:1040px;top:510px;width:120px;text-align:right;color:#00e0ff;line-height:22px">3212<span style="font-weight:normal;font-size:16px;position:relative;top:1px">万</span></div>
<div class="a n" style="left:1091px;top:510px;width:120px;text-align:right;color:#ff3232;line-height:22px">1.59</div>
<div class="a" style="left:1223px;top:510px;color:#c0c0c0;font-size:16px;line-height:22px">汽车服务</div>
<div class="a" style="left:0;top:532px;width:40px;text-align:center;font-size:14px;color:#d0d0d0;line-height:22px;-webkit-text-stroke:0.15px #d0d0d0">20</div>
<div class="a n" style="left:47px;top:532px;color:#ffff80;line-height:22px">000026</div>
<div class="a" style="left:105px;top:532px;color:#ffff80;font-size:16px;line-height:22px">飞亚达</div>
<div class="a n" style="left:128px;top:532px;width:120px;text-align:right;color:#ff3232;line-height:22px">1.89</div>
<div class="a n" style="left:195px;top:532px;width:120px;text-align:right;color:#ff3232;line-height:22px">12.38</div>
<div class="a n" style="left:895px;top:532px;width:120px;text-align:right;color:#e0e0e0;line-height:22px">12.15</div>
<div class="a n" style="left:971px;top:532px;width:120px;text-align:right;color:#c0c0c0;line-height:22px">18.84</div>
<div class="a n" style="left:1040px;top:532px;width:120px;text-align:right;color:#00e0ff;line-height:22px">1.33<span style="font-weight:normal;font-size:16px;position:relative;top:1px">亿</span></div>
<div class="a n" style="left:1091px;top:532px;width:120px;text-align:right;color:#ff3232;line-height:22px">1.09</div>
<div class="a" style="left:1223px;top:532px;color:#c0c0c0;font-size:16px;line-height:22px">其他商业</div>
<div class="a" style="left:0;top:554px;width:40px;text-align:center;font-size:14px;color:#d0d0d0;line-height:22px;-webkit-text-stroke:0.15px #d0d0d0">21</div>
<div class="a n" style="left:47px;top:554px;color:#ffff80;line-height:22px">000027</div>
<div class="a" style="left:105px;top:554px;color:#ffff80;font-size:16px;line-height:22px">深圳能源</div>
<div class="a n" style="left:190px;top:562px;color:#ff5050;font-size:12px;line-height:1">R</div>
<div class="a" style="left:192px;top:560px;width:2px;height:2px;background:#ff00ff;"></div>
<div class="a n" style="left:128px;top:554px;width:120px;text-align:right;color:#00e600;line-height:22px">-3.26</div>
<div class="a n" style="left:195px;top:554px;width:120px;text-align:right;color:#00e600;line-height:22px">5.94</div>
<div class="a n" style="left:895px;top:554px;width:120px;text-align:right;color:#e0e0e0;line-height:22px">6.14</div>
<div class="a n" style="left:971px;top:554px;width:120px;text-align:right;color:#c0c0c0;line-height:22px">5.44</div>
<div class="a n" style="left:1040px;top:554px;width:120px;text-align:right;color:#00e0ff;line-height:22px">2.40<span style="font-weight:normal;font-size:16px;position:relative;top:1px">亿</span></div>
<div class="a n" style="left:1091px;top:554px;width:120px;text-align:right;color:#00e600;line-height:22px">0.89</div>
<div class="a" style="left:1223px;top:554px;color:#c0c0c0;font-size:16px;line-height:22px">火力发电</div>
<div class="a" style="left:0;top:576px;width:40px;text-align:center;font-size:14px;color:#d0d0d0;line-height:22px;-webkit-text-stroke:0.15px #d0d0d0">22</div>
<div class="a n" style="left:47px;top:576px;color:#ffff80;line-height:22px">000028</div>
<div class="a" style="left:105px;top:576px;color:#ffff80;font-size:16px;line-height:22px">国药一致</div>
<div class="a n" style="left:190px;top:584px;color:#ff5050;font-size:12px;line-height:1">R</div>
<div class="a" style="left:192px;top:582px;width:2px;height:2px;background:#ff00ff;"></div>
<div class="a n" style="left:128px;top:576px;width:120px;text-align:right;color:#00e600;line-height:22px">-0.21</div>
<div class="a n" style="left:195px;top:576px;width:120px;text-align:right;color:#00e600;line-height:22px">38.93</div>
<div class="a n" style="left:895px;top:576px;width:120px;text-align:right;color:#e0e0e0;line-height:22px">38.91</div>
<div class="a n" style="left:971px;top:576px;width:120px;text-align:right;color:#c0c0c0;line-height:22px">12.53</div>
<div class="a n" style="left:1040px;top:576px;width:120px;text-align:right;color:#00e0ff;line-height:22px">7470<span style="font-weight:normal;font-size:16px;position:relative;top:1px">万</span></div>
<div class="a n" style="left:1091px;top:576px;width:120px;text-align:right;color:#00e600;line-height:22px">0.69</div>
<div class="a" style="left:1223px;top:576px;color:#c0c0c0;font-size:16px;line-height:22px">医药商业</div>
<div class="a" style="left:0;top:598px;width:40px;text-align:center;font-size:14px;color:#d0d0d0;line-height:22px;-webkit-text-stroke:0.15px #d0d0d0">23</div>
<div class="a n" style="left:47px;top:598px;color:#ffff80;line-height:22px">000029</div>
<div class="a" style="left:105px;top:598px;color:#ffff80;font-size:16px;line-height:22px">深深房Ａ</div>
<div class="a n" style="left:128px;top:598px;width:120px;text-align:right;color:#00e600;line-height:22px">-2.69</div>
<div class="a n" style="left:195px;top:598px;width:120px;text-align:right;color:#00e600;line-height:22px">6.51</div>
<div class="a n" style="left:895px;top:598px;width:120px;text-align:right;color:#e0e0e0;line-height:22px">6.69</div>
<div class="a n" style="left:971px;top:598px;width:120px;text-align:right;color:#c0c0c0;line-height:22px">24.84</div>
<div class="a n" style="left:1040px;top:598px;width:120px;text-align:right;color:#00e0ff;line-height:22px">3549<span style="font-weight:normal;font-size:16px;position:relative;top:1px">万</span></div>
<div class="a n" style="left:1091px;top:598px;width:120px;text-align:right;color:#00e600;line-height:22px">0.87</div>
<div class="a" style="left:1223px;top:598px;color:#c0c0c0;font-size:16px;line-height:22px">区域地产</div>
<div class="a" style="left:0;top:620px;width:40px;text-align:center;font-size:14px;color:#d0d0d0;line-height:22px;-webkit-text-stroke:0.15px #d0d0d0">24</div>
<div class="a n" style="left:47px;top:620px;color:#ffff80;line-height:22px">000030</div>
<div class="a" style="left:105px;top:620px;color:#ffff80;font-size:16px;line-height:22px">富奥股份</div>
<div class="a n" style="left:190px;top:628px;color:#ff5050;font-size:12px;line-height:1">R</div>
<div class="a" style="left:192px;top:626px;width:2px;height:2px;background:#ff00ff;"></div>
<div class="a n" style="left:128px;top:620px;width:120px;text-align:right;color:#00e600;line-height:22px">-0.93</div>
<div class="a n" style="left:195px;top:620px;width:120px;text-align:right;color:#00e600;line-height:22px">6.37</div>
<div class="a n" style="left:895px;top:620px;width:120px;text-align:right;color:#e0e0e0;line-height:22px">6.43</div>
<div class="a n" style="left:971px;top:620px;width:120px;text-align:right;color:#c0c0c0;line-height:22px">12.46</div>
<div class="a n" style="left:1040px;top:620px;width:120px;text-align:right;color:#00e0ff;line-height:22px">2025<span style="font-weight:normal;font-size:16px;position:relative;top:1px">万</span></div>
<div class="a n" style="left:1091px;top:620px;width:120px;text-align:right;color:#00e600;line-height:22px">0.68</div>
<div class="a" style="left:1223px;top:620px;color:#c0c0c0;font-size:16px;line-height:22px">汽车配件</div>
<div class="a" style="left:0;top:642px;width:40px;text-align:center;font-size:14px;color:#d0d0d0;line-height:22px;-webkit-text-stroke:0.15px #d0d0d0">25</div>
<div class="a n" style="left:47px;top:642px;color:#ffff80;line-height:22px">000031</div>
<div class="a" style="left:105px;top:642px;color:#ffff80;font-size:16px;line-height:22px">大悦城</div>
<div class="a n" style="left:190px;top:650px;color:#ff5050;font-size:12px;line-height:1">R</div>
<div class="a" style="left:192px;top:648px;width:2px;height:2px;background:#ff00ff;"></div>
<div class="a n" style="left:128px;top:642px;width:120px;text-align:right;color:#e0e0e0;line-height:22px">0.00</div>
<div class="a n" style="left:195px;top:642px;width:120px;text-align:right;color:#e0e0e0;line-height:22px">3.61</div>
<div class="a n" style="left:895px;top:642px;width:120px;text-align:right;color:#e0e0e0;line-height:22px">3.61</div>
<div class="a n" style="left:971px;top:642px;width:120px;text-align:right;color:#c0c0c0;line-height:22px">15.26</div>
<div class="a n" style="left:1040px;top:642px;width:120px;text-align:right;color:#00e0ff;line-height:22px">2755<span style="font-weight:normal;font-size:16px;position:relative;top:1px">万</span></div>
<div class="a n" style="left:1091px;top:642px;width:120px;text-align:right;color:#00e600;line-height:22px">0.86</div>
<div class="a" style="left:1223px;top:642px;color:#c0c0c0;font-size:16px;line-height:22px">全国地产</div>
<div class="a" style="left:0;top:664px;width:40px;text-align:center;font-size:14px;color:#d0d0d0;line-height:22px;-webkit-text-stroke:0.15px #d0d0d0">26</div>
<div class="a n" style="left:47px;top:664px;color:#ffff80;line-height:22px">000032</div>
<div class="a" style="left:105px;top:664px;color:#ffff80;font-size:16px;line-height:22px">深桑达Ａ</div>
<div class="a n" style="left:128px;top:664px;width:120px;text-align:right;color:#00e600;line-height:22px">-2.51</div>
<div class="a n" style="left:195px;top:664px;width:120px;text-align:right;color:#00e600;line-height:22px">18.24</div>
<div class="a n" style="left:895px;top:664px;width:120px;text-align:right;color:#e0e0e0;line-height:22px">18.70</div>
<div class="a n" style="left:971px;top:664px;width:120px;text-align:right;color:#c0c0c0;line-height:22px">70.70</div>
<div class="a n" style="left:1040px;top:664px;width:120px;text-align:right;color:#00e0ff;line-height:22px">2020<span style="font-weight:normal;font-size:16px;position:relative;top:1px">万</span></div>
<div class="a n" style="left:1091px;top:664px;width:120px;text-align:right;color:#00e600;line-height:22px">0.83</div>
<div class="a" style="left:1223px;top:664px;color:#c0c0c0;font-size:16px;line-height:22px">元器件</div>
<div class="a" style="left:0;top:686px;width:40px;text-align:center;font-size:14px;color:#d0d0d0;line-height:22px;-webkit-text-stroke:0.15px #d0d0d0">27</div>
<div class="a n" style="left:47px;top:686px;color:#ffff80;line-height:22px">000034</div>
<div class="a" style="left:105px;top:686px;color:#ffff80;font-size:16px;line-height:22px">神州数码</div>
<div class="a n" style="left:190px;top:694px;color:#ff5050;font-size:12px;line-height:1">R</div>
<div class="a" style="left:192px;top:692px;width:2px;height:2px;background:#ff00ff;"></div>
<div class="a n" style="left:128px;top:686px;width:120px;text-align:right;color:#00e600;line-height:22px">-1.94</div>
<div class="a n" style="left:195px;top:686px;width:120px;text-align:right;color:#00e600;line-height:22px">17.70</div>
<div class="a n" style="left:895px;top:686px;width:120px;text-align:right;color:#e0e0e0;line-height:22px">18.05</div>
<div class="a n" style="left:971px;top:686px;width:120px;text-align:right;color:#c0c0c0;line-height:22px">22.24</div>
<div class="a n" style="left:1040px;top:686px;width:120px;text-align:right;color:#00e0ff;line-height:22px">9962<span style="font-weight:normal;font-size:16px;position:relative;top:1px">万</span></div>
<div class="a n" style="left:1091px;top:686px;width:120px;text-align:right;color:#00e600;line-height:22px">0.75</div>
<div class="a" style="left:1223px;top:686px;color:#c0c0c0;font-size:16px;line-height:22px">综合类</div>
<div class="a" style="left:0;top:708px;width:40px;text-align:center;font-size:14px;color:#d0d0d0;line-height:22px;-webkit-text-stroke:0.15px #d0d0d0">28</div>
<div class="a n" style="left:47px;top:708px;color:#ffff80;line-height:22px">000035</div>
<div class="a" style="left:105px;top:708px;color:#ffff80;font-size:16px;line-height:22px">中国天楹</div>
<div class="a n" style="left:190px;top:716px;color:#ff5050;font-size:12px;line-height:1">R</div>
<div class="a" style="left:192px;top:714px;width:2px;height:2px;background:#ff00ff;"></div>
<div class="a n" style="left:128px;top:708px;width:120px;text-align:right;color:#00e600;line-height:22px">-2.85</div>
<div class="a n" style="left:195px;top:708px;width:120px;text-align:right;color:#00e600;line-height:22px">3.75</div>
<div class="a n" style="left:895px;top:708px;width:120px;text-align:right;color:#e0e0e0;line-height:22px">3.86</div>
<div class="a n" style="left:971px;top:708px;width:120px;text-align:right;color:#c0c0c0;line-height:22px">14.30</div>
<div class="a n" style="left:1040px;top:708px;width:120px;text-align:right;color:#00e0ff;line-height:22px">2302<span style="font-weight:normal;font-size:16px;position:relative;top:1px">万</span></div>
<div class="a n" style="left:1091px;top:708px;width:120px;text-align:right;color:#ff3232;line-height:22px">1.42</div>
<div class="a" style="left:1223px;top:708px;color:#c0c0c0;font-size:16px;line-height:22px">环境保护</div>
<div class="a n" style="left:255px;top:114px;width:120px;text-align:right;color:#ff3232;line-height:22px">1.79</div>
<div class="a n" style="left:323px;top:114px;width:120px;text-align:right;color:#ff3232;line-height:22px">25.06</div>
<div class="a n" style="left:391px;top:114px;width:120px;text-align:right;color:#ff3232;line-height:22px">25.07</div>
<div class="a n" style="left:511px;top:114px;width:120px;text-align:right;color:#ff3232;line-height:22px">111</div>
<div class="a n" style="left:564px;top:114px;width:120px;text-align:right;color:#ff3232;line-height:22px">0.12</div>
<div class="a n" style="left:624px;top:114px;width:120px;text-align:right;color:#e0e0e0;line-height:22px">0.89</div>
<div class="a n" style="left:692px;top:114px;width:120px;text-align:right;color:#ff3232;line-height:22px">23.48</div>
<div class="a n" style="left:760px;top:114px;width:120px;text-align:right;color:#ff3232;line-height:22px">25.18</div>
<div class="a n" style="left:828px;top:114px;width:120px;text-align:right;color:#ff3232;line-height:22px">23.38</div>
<div class="a n" style="left:450px;top:114px;width:120px;text-align:right;color:#e8e800;line-height:22px">173.3<span style="font-weight:normal;font-size:16px;position:relative;top:1px">万</span></div>
<div class="a n" style="left:255px;top:686px;width:120px;text-align:right;color:#00e600;line-height:22px">-0.35</div>
<div class="a n" style="left:323px;top:686px;width:120px;text-align:right;color:#00e600;line-height:22px">17.70</div>
<div class="a n" style="left:391px;top:686px;width:120px;text-align:right;color:#00e600;line-height:22px">17.71</div>
<div class="a n" style="left:511px;top:686px;width:120px;text-align:right;color:#00e600;line-height:22px">1</div>
<div class="a n" style="left:564px;top:686px;width:120px;text-align:right;color:#00e600;line-height:22px">-0.10</div>
<div class="a n" style="left:624px;top:686px;width:120px;text-align:right;color:#e0e0e0;line-height:22px">1.13</div>
<div class="a n" style="left:692px;top:686px;width:120px;text-align:right;color:#00e600;line-height:22px">18.00</div>
<div class="a n" style="left:760px;top:686px;width:120px;text-align:right;color:#ff3232;line-height:22px">18.08</div>
<div class="a n" style="left:828px;top:686px;width:120px;text-align:right;color:#00e600;line-height:22px">17.55</div>
<div class="a n" style="left:255px;top:708px;width:120px;text-align:right;color:#00e600;line-height:22px">-0.11</div>
<div class="a n" style="left:323px;top:708px;width:120px;text-align:right;color:#00e600;line-height:22px">3.75</div>
<div class="a n" style="left:391px;top:708px;width:120px;text-align:right;color:#00e600;line-height:22px">3.76</div>
<div class="a n" style="left:511px;top:708px;width:120px;text-align:right;color:#00e600;line-height:22px">34</div>
<div class="a n" style="left:564px;top:708px;width:120px;text-align:right;color:#e0e0e0;line-height:22px">0.00</div>
<div class="a n" style="left:624px;top:708px;width:120px;text-align:right;color:#e0e0e0;line-height:22px">0.25</div>
<div class="a n" style="left:692px;top:708px;width:120px;text-align:right;color:#ff3232;line-height:22px">3.87</div>
<div class="a n" style="left:760px;top:708px;width:120px;text-align:right;color:#ff3232;line-height:22px">3.88</div>
<div class="a n" style="left:828px;top:708px;width:120px;text-align:right;color:#00e600;line-height:22px">3.74</div>
<div class="a n" style="left:450px;top:686px;width:120px;text-align:right;color:#e8e800;line-height:22px">56025</div>
<div class="a n" style="left:450px;top:708px;width:120px;text-align:right;color:#e8e800;line-height:22px">60935</div>
<div class="a" style="left:41px;top:135px;width:1239px;height:1px;background:#c8c800;"></div>
<svg class="a" style="left:0;top:414px" width="10" height="54"><path d="M0 0 L9 11 V43 L0 54Z" fill="#3c3c3c" stroke="#5a5a5a" stroke-width="1"/><path d="M1 21 L6 26 L1 31Z" fill="#e8a000"/></svg>
<div class="a" style="left:313px;top:136px;width:698px;height:557px;background:#f0f0f0;box-sizing:border-box;border-left:1px solid #ffffff;border-right:1px solid #d0ccc0;border-bottom:1px solid #b0aca0;"></div>
<div class="a" style="left:313px;top:136px;width:698px;height:22px;background:#c6c2b6;"></div>
<div class="a" style="left:318px;top:141px;font-size:12px;color:#000;font-weight:bold;">系统设置</div>
<svg class="a" style="left:995px;top:140px" width="14" height="14"><path d="M1.5 1.5L12.5 12.5M12.5 1.5L1.5 12.5" stroke="#8a8a8a" stroke-width="1.2"/></svg>
<div class="a" style="left:321px;top:191px;width:682px;height:454px;background:#f0f0f0;box-sizing:border-box;border-top:1px solid #fff;border-left:1px solid #fff;border-right:2px solid #8a8a8a;border-bottom:2px solid #8a8a8a;"></div>
<div class="a" style="left:371px;top:170px;width:48px;height:22px;box-sizing:border-box;border-top:1px solid #fff;border-left:1px solid #fff;border-right:2px solid #8a8a8a;background:#f0f0f0"></div>
<div class="a" style="left:377px;top:175px;font-size:12px;color:#000;">设置1</div>
<div class="a" style="left:419px;top:170px;width:48px;height:22px;box-sizing:border-box;border-top:1px solid #fff;border-left:1px solid #fff;border-right:2px solid #8a8a8a;background:#f0f0f0"></div>
<div class="a" style="left:425px;top:175px;font-size:12px;color:#000;">设置2</div>
<div class="a" style="left:467px;top:170px;width:48px;height:22px;box-sizing:border-box;border-top:1px solid #fff;border-left:1px solid #fff;border-right:2px solid #8a8a8a;background:#f0f0f0"></div>
<div class="a" style="left:473px;top:175px;font-size:12px;color:#000;">设置3</div>
<div class="a" style="left:515px;top:170px;width:48px;height:22px;box-sizing:border-box;border-top:1px solid #fff;border-left:1px solid #fff;border-right:2px solid #8a8a8a;background:#f0f0f0"></div>
<div class="a" style="left:521px;top:175px;font-size:12px;color:#000;">设置4</div>
<div class="a" style="left:563px;top:170px;width:48px;height:22px;box-sizing:border-box;border-top:1px solid #fff;border-left:1px solid #fff;border-right:2px solid #8a8a8a;background:#f0f0f0"></div>
<div class="a" style="left:569px;top:175px;font-size:12px;color:#000;">周期</div>
<div class="a" style="left:611px;top:170px;width:48px;height:22px;box-sizing:border-box;border-top:1px solid #fff;border-left:1px solid #fff;border-right:2px solid #8a8a8a;background:#f0f0f0"></div>
<div class="a" style="left:617px;top:175px;font-size:12px;color:#000;">标签</div>
<div class="a" style="left:659px;top:170px;width:48px;height:22px;box-sizing:border-box;border-top:1px solid #fff;border-left:1px solid #fff;border-right:2px solid #8a8a8a;background:#f0f0f0"></div>
<div class="a" style="left:665px;top:175px;font-size:12px;color:#000;">输入</div>
<div class="a" style="left:707px;top:170px;width:48px;height:22px;box-sizing:border-box;border-top:1px solid #fff;border-left:1px solid #fff;border-right:2px solid #8a8a8a;background:#f0f0f0"></div>
<div class="a" style="left:713px;top:175px;font-size:12px;color:#000;">链接</div>
<div class="a" style="left:322px;top:167px;width:50px;height:26px;box-sizing:border-box;border-top:1px solid #fff;border-left:1px solid #fff;border-right:2px solid #8a8a8a;background:#f0f0f0"></div>
<div class="a" style="left:329px;top:172px;font-size:12px;color:#000;">外观</div>
<div class="a" style="left:350px;top:209px;font-size:12px;color:#000;">方案预览</div>
<div class="a" style="left:349px;top:230px;width:292px;height:348px;background:#000;"></div>
<div class="a" style="left:352px;top:233px;font-size:12px;color:#ffff00;">行情标题</div>
<div class="a" style="left:419px;top:233px;font-size:12px;color:#c0c0c0;">图形文字</div>
<div class="a" style="left:481px;top:233px;font-size:12px;color:#c0a000;">成交量:</div>
<div class="a" style="left:524px;top:238px;width:112px;height:1px;background:#c0a000;"></div>
<div class="a" style="left:481px;top:247px;font-size:12px;color:#ffffff;">输出一:</div>
<div class="a" style="left:524px;top:252px;width:112px;height:1px;background:#ffffff;"></div>
<div class="a" style="left:481px;top:261px;font-size:12px;color:#ffff00;">输出二:</div>
<div class="a" style="left:524px;top:266px;width:112px;height:1px;background:#ffff00;"></div>
<div class="a" style="left:481px;top:275px;font-size:12px;color:#ff00ff;">输出三:</div>
<div class="a" style="left:524px;top:280px;width:112px;height:1px;background:#ff00ff;"></div>
<div class="a" style="left:481px;top:289px;font-size:12px;color:#00ff00;">输出四:</div>
<div class="a" style="left:524px;top:294px;width:112px;height:1px;background:#00ff00;"></div>
<div class="a" style="left:481px;top:303px;font-size:12px;color:#c0c0c0;">输出五:</div>
<div class="a" style="left:524px;top:308px;width:112px;height:1px;background:#c0c0c0;"></div>
<div class="a" style="left:481px;top:317px;font-size:12px;color:#0000ff;">输出六:</div>
<div class="a" style="left:524px;top:322px;width:112px;height:1px;background:#0000ff;"></div>
<div class="a" style="left:481px;top:331px;font-size:12px;color:#00ffff;">其它线:</div>
<div class="a" style="left:524px;top:336px;width:112px;height:1px;background:#00ffff;"></div>
<div class="a" style="left:481px;top:345px;font-size:12px;color:#ffff00;">画线工具:</div>
<div class="a" style="left:534px;top:350px;width:102px;height:1px;background:#ffff00;"></div>
<div class="a" style="left:354px;top:247px;width:1px;height:97px;background:#c00000;"></div>
<div class="a" style="left:354px;top:343px;width:109px;height:1px;background:#c00000;"></div>
<div class="a" style="left:357px;top:248px;width:60px;height:15px;background:#000080;"></div>
<div class="a" style="left:358px;top:249px;font-size:12px;color:#ffffff;">高亮背景色</div>
<div class="a" style="left:429px;top:249px;font-size:12px;color:#c00000;">间隔线</div>
<div class="a" style="left:369px;top:264px;font-size:12px;color:#00ffff;">阴线</div>
<div class="a" style="left:408px;top:264px;font-size:12px;color:#ff3030;">阳线</div>
<div class="a" style="left:444px;top:264px;font-size:12px;color:#ffffff;">平线</div>
<div class="a" style="left:371px;top:278px;width:1px;height:60px;background:#40ffff;"></div>
<div class="a" style="left:364px;top:288px;width:16px;height:40px;background:#40ffff;"></div>
<div class="a" style="left:391px;top:278px;width:1px;height:60px;background:#40ffff;"></div>
<div class="a" style="left:384px;top:288px;width:16px;height:40px;background:#40ffff;"></div>
<div class="a" style="left:411px;top:278px;width:1px;height:60px;background:#ff3030;"></div>
<div class="a" style="left:404px;top:288px;width:16px;height:40px;background:#000;box-sizing:border-box;border:1px solid #ff3030;"></div>
<div class="a" style="left:431px;top:278px;width:1px;height:60px;background:#ff3030;"></div>
<div class="a" style="left:424px;top:288px;width:16px;height:40px;background:#000;box-sizing:border-box;border:1px solid #ff3030;"></div>
<div class="a" style="left:449px;top:278px;width:1px;height:60px;background:#ffffff;"></div>
<div class="a" style="left:459px;top:278px;width:1px;height:60px;background:#ffffff;"></div>
<div class="a" style="left:352px;top:346px;font-size:12px;color:#c00000;">坐标 99/01/01 12:12</div>
<div class="a" style="left:387px;top:366px;font-size:12px;color:#c0c0c0;">名称</div>
<div class="a" style="left:437px;top:366px;font-size:12px;color:#c0c0c0;">现价</div>
<div class="a" style="left:462px;top:366px;font-size:12px;color:#ff0000;">↓</div>
<div class="a" style="left:480px;top:366px;font-size:12px;color:#c0c0c0;">总量</div>
<div class="a" style="left:526px;top:366px;font-size:12px;color:#c0c0c0;">其它</div>
<div class="a" style="left:361px;top:387px;font-size:12px;color:#c0c0c0;">1</div>
<div class="a" style="left:383px;top:388px;font-size:12px;color:#ffff80;">品种一</div>
<div class="a" style="left:434px;top:388px;font-size:12px;color:#00c000">6.83</div>
<div class="a" style="left:460px;top:388px;width:49px;text-align:right;font-size:12px;color:#c0b000">18414</div>
<div class="a" style="left:525px;top:388px;font-size:12px;color:#00c0ff">10.38</div>
<div class="a" style="left:361px;top:409px;font-size:12px;color:#c0c0c0;">2</div>
<div class="a" style="left:383px;top:410px;font-size:12px;color:#ffff80;">品种二</div>
<div class="a" style="left:434px;top:410px;font-size:12px;color:#ffffff">5.85</div>
<div class="a" style="left:460px;top:410px;width:49px;text-align:right;font-size:12px;color:#c0b000">12981</div>
<div class="a" style="left:525px;top:410px;font-size:12px;color:#00c0ff">10.30</div>
<div class="a" style="left:361px;top:431px;font-size:12px;color:#c0c0c0;">3</div>
<div class="a" style="left:383px;top:432px;font-size:12px;color:#ffff80;">品种三</div>
<div class="a" style="left:434px;top:432px;font-size:12px;color:#ff3030">3.16</div>
<div class="a" style="left:460px;top:432px;width:49px;text-align:right;font-size:12px;color:#c0b000">28291</div>
<div class="a" style="left:525px;top:432px;font-size:12px;color:#00c0ff">11.23</div>
<div class="a" style="left:382px;top:426px;width:49px;height:1px;background:#ffff80;"></div>
<div class="a" style="left:355px;top:559px;width:78px;height:16px;background:#fff;"></div>
<div class="a" style="left:357px;top:561px;font-size:12px;color:#000;">财经资讯文本</div>
<div class="a" style="left:442px;top:559px;width:66px;height:16px;background:#fff;"></div>
<div class="a" style="left:444px;top:561px;font-size:12px;color:#000;">功能树文本</div>
<div class="a" style="left:350px;top:590px;width:82px;height:32px;box-sizing:border-box;border:1px solid #7a7a7a;border-radius:2px;background:linear-gradient(#fbfbfb,#e6e6e6 50%,#dcdcdc);font-size:12px;color:#000;text-align:center;line-height:30px;-webkit-text-stroke:0.25px #000">字体风格</div>
<div class="a" style="left:444px;top:590px;width:100px;height:32px;box-sizing:border-box;border:1px solid #7a7a7a;border-radius:2px;background:linear-gradient(#fbfbfb,#e6e6e6 50%,#dcdcdc);font-size:12px;color:#000;text-align:center;line-height:30px;-webkit-text-stroke:0.25px #000">经典字体设置</div>
<div class="a" style="left:556px;top:590px;width:82px;height:32px;box-sizing:border-box;border:1px solid #7a7a7a;border-radius:2px;background:linear-gradient(#fbfbfb,#e6e6e6 50%,#dcdcdc);font-size:12px;color:#000;text-align:center;line-height:30px;-webkit-text-stroke:0.25px #000">报价字号</div>
<div class="a" style="left:680px;top:590px;width:79px;height:32px;box-sizing:border-box;border:1px solid #7a7a7a;border-radius:2px;background:linear-gradient(#fbfbfb,#e6e6e6 50%,#dcdcdc);font-size:12px;color:#a0a0a0;text-align:center;line-height:30px;-webkit-text-stroke:0.25px #a0a0a0">其它颜色..</div>
<div class="a" style="left:773px;top:590px;width:100px;height:32px;box-sizing:border-box;border:1px solid #7a7a7a;border-radius:2px;background:linear-gradient(#fbfbfb,#e6e6e6 50%,#dcdcdc);font-size:12px;color:#a0a0a0;text-align:center;line-height:30px;-webkit-text-stroke:0.25px #a0a0a0">方案另存为..</div>
<div class="a" style="left:887px;top:590px;width:70px;height:32px;box-sizing:border-box;border:1px solid #7a7a7a;border-radius:2px;background:linear-gradient(#fbfbfb,#e6e6e6 50%,#dcdcdc);font-size:12px;color:#000;text-align:center;line-height:30px;-webkit-text-stroke:0.25px #000">删除方案</div>
<div class="a" style="left:821px;top:653px;width:88px;height:30px;box-sizing:border-box;border:1px solid #7a7a7a;border-radius:2px;background:linear-gradient(#fbfbfb,#e6e6e6 50%,#dcdcdc);font-size:12px;color:#000;text-align:center;line-height:28px;-webkit-text-stroke:0.25px #000">确定</div>
<div class="a" style="left:916px;top:653px;width:88px;height:30px;box-sizing:border-box;border:1px solid #7a7a7a;border-radius:2px;background:linear-gradient(#fbfbfb,#e6e6e6 50%,#dcdcdc);font-size:12px;color:#000;text-align:center;line-height:28px;-webkit-text-stroke:0.25px #000">取消</div>
<div class="a" style="left:680px;top:214px;font-size:12px;color:#000;">配色方案</div>
<div class="a" style="left:750px;top:208px;width:203px;height:26px;box-sizing:border-box;border:1px solid #a0a0a0;background:#fff"></div>
<div class="a" style="left:755px;top:214px;font-size:12px;color:#000;">定制</div>
<div class="a" style="left:934px;top:209px;width:1px;height:24px;background:#c8c8c8;"></div>
<svg class="a" style="left:939px;top:219px" width="9" height="5"><path d="M0.5 0.5H7.5L4 4Z" fill="#707070"/></svg>
<div class="a" style="left:680px;top:244px;width:273px;height:125px;box-sizing:border-box;border:1px solid #828282;background:#fff"></div>
<div class="a" style="left:934px;top:246px;width:17px;height:121px;background:#f2f2f2;"></div>
<div class="a" style="left:936px;top:263px;width:11px;height:20px;box-sizing:border-box;border:1px solid #8a8a8a;background:#f4f4f4"></div>
<div class="a" style="left:684px;top:248px;font-size:12px;color:#000;">背景色</div>
<div class="a" style="left:684px;top:265px;font-size:12px;color:#000;">阳线及上涨字</div>
<div class="a" style="left:684px;top:282px;font-size:12px;color:#000;">阴线</div>
<div class="a" style="left:684px;top:299px;font-size:12px;color:#000;">下跌字</div>
<div class="a" style="left:684px;top:316px;font-size:12px;color:#000;">平线</div>
<div class="a" style="left:684px;top:333px;font-size:12px;color:#000;">间隔线</div>
<div class="a" style="left:684px;top:350px;font-size:12px;color:#000;">坐标轴线</div>
<div class="a" style="left:680px;top:375px;width:275px;height:200px;box-sizing:border-box;border:1px solid #8a8a8a;border-radius:4px"></div>
<div class="a" style="left:685px;top:380px;width:36px;height:22px;box-sizing:border-box;border:2px solid #c0c0c0;background:#000000"></div>
<div class="a" style="left:729px;top:380px;width:36px;height:22px;box-sizing:border-box;border:2px solid #c0c0c0;background:#ffffff"></div>
<div class="a" style="left:773px;top:380px;width:36px;height:22px;box-sizing:border-box;border:2px solid #c0c0c0;background:#ff0000"></div>
<div class="a" style="left:817px;top:380px;width:36px;height:22px;box-sizing:border-box;border:2px solid #c0c0c0;background:#00ff00"></div>
<div class="a" style="left:861px;top:380px;width:36px;height:22px;box-sizing:border-box;border:2px solid #c0c0c0;background:#0000ff"></div>
<div class="a" style="left:685px;top:406px;width:36px;height:22px;box-sizing:border-box;border:2px solid #c0c0c0;background:#ffff00"></div>
<div class="a" style="left:729px;top:406px;width:36px;height:22px;box-sizing:border-box;border:2px solid #c0c0c0;background:#00ffff"></div>
<div class="a" style="left:773px;top:406px;width:36px;height:22px;box-sizing:border-box;border:2px solid #c0c0c0;background:#ff00ff"></div>
<div class="a" style="left:817px;top:406px;width:36px;height:22px;box-sizing:border-box;border:2px solid #c0c0c0;background:#808000"></div>
<div class="a" style="left:861px;top:406px;width:36px;height:22px;box-sizing:border-box;border:2px solid #c0c0c0;background:#808080"></div>
<div class="a" style="left:685px;top:432px;width:36px;height:22px;box-sizing:border-box;border:2px solid #c0c0c0;background:#800080"></div>
<div class="a" style="left:729px;top:432px;width:36px;height:22px;box-sizing:border-box;border:2px solid #c0c0c0;background:#008080"></div>
<div class="a" style="left:773px;top:432px;width:36px;height:22px;box-sizing:border-box;border:2px solid #c0c0c0;background:#000080"></div>
<div class="a" style="left:817px;top:432px;width:36px;height:22px;box-sizing:border-box;border:2px solid #c0c0c0;background:#008000"></div>
<div class="a" style="left:861px;top:432px;width:36px;height:22px;box-sizing:border-box;border:2px solid #c0c0c0;background:#800000"></div>
<div class="a" style="left:685px;top:458px;width:36px;height:22px;box-sizing:border-box;border:2px solid #c0c0c0;background:#c0c0c0"></div>
<div class="a" style="left:729px;top:458px;width:36px;height:22px;box-sizing:border-box;border:2px solid #c0c0c0;background:#8000ff"></div>
<div class="a" style="left:773px;top:458px;width:36px;height:22px;box-sizing:border-box;border:2px solid #c0c0c0;background:#ff0080"></div>
<div class="a" style="left:817px;top:458px;width:36px;height:22px;box-sizing:border-box;border:2px solid #c0c0c0;background:#0080ff"></div>
<div class="a" style="left:861px;top:458px;width:36px;height:22px;box-sizing:border-box;border:2px solid #c0c0c0;background:#00ff80"></div>
<div class="a" style="left:685px;top:484px;width:36px;height:22px;box-sizing:border-box;border:2px solid #c0c0c0;background:#80ff00"></div>
<div class="a" style="left:729px;top:484px;width:36px;height:22px;box-sizing:border-box;border:2px solid #c0c0c0;background:#ff8000"></div>
<div class="a" style="left:773px;top:484px;width:36px;height:22px;box-sizing:border-box;border:2px solid #c0c0c0;background:#0080c0"></div>
<div class="a" style="left:817px;top:484px;width:36px;height:22px;box-sizing:border-box;border:2px solid #c0c0c0;background:#00c080"></div>
<div class="a" style="left:861px;top:484px;width:36px;height:22px;box-sizing:border-box;border:2px solid #c0c0c0;background:#80c000"></div>
</body></html>
